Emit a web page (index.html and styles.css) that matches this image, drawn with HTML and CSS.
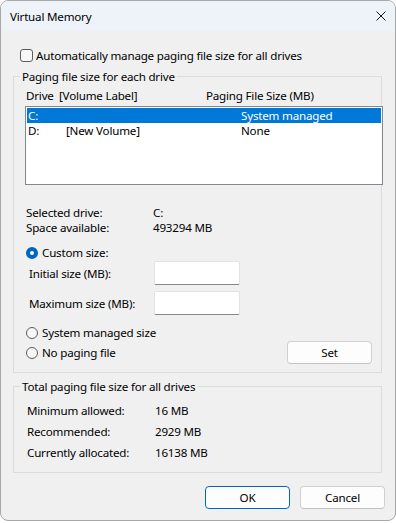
FILE: index.html
```html
<!DOCTYPE html>
<html>
<head>
<meta charset="utf-8">
<link rel="stylesheet" href="styles.css">
</head>
<body>
<div class="window">
  <div class="titlebar">
    <span class="title">Virtual Memory</span>
    <svg class="close" width="10" height="10" viewBox="0 0 10 10"><path d="M0.5 0.5 L9.5 9.5 M9.5 0.5 L0.5 9.5" stroke="#1a1a1a" stroke-width="1" fill="none"/></svg>
  </div>
  <div class="main">
    <div class="check-row">
      <span class="checkbox"></span>
      <span class="check-label">Automatically manage paging file size for all drives</span>
    </div>
    <fieldset class="group group1">
      <legend>Paging file size for each drive</legend>
      <div class="list-header">
        <span class="hd-drive">Drive</span>
        <span class="hd-label">[Volume Label]</span>
        <span class="hd-size">Paging File Size (MB)</span>
      </div>
      <div class="listbox">
        <div class="list-row selected">
          <span class="c-drive">C:</span>
          <span class="c-label"></span>
          <span class="c-size">System managed</span>
        </div>
        <div class="list-row">
          <span class="c-drive">D:</span>
          <span class="c-label">[New Volume]</span>
          <span class="c-size">None</span>
        </div>
      </div>
      <div class="info">
        <div class="info-row"><span class="info-key">Selected drive:</span><span>C:</span></div>
        <div class="info-row"><span class="info-key">Space available:</span><span>493294 MB</span></div>
      </div>
      <div class="radio-row first-radio">
        <span class="radio checked"></span>
        <span>Custom size:</span>
      </div>
      <div class="field-row">
        <span class="field-label">Initial size (MB):</span>
        <span class="textbox"></span>
      </div>
      <div class="field-row second">
        <span class="field-label">Maximum size (MB):</span>
        <span class="textbox"></span>
      </div>
      <div class="radio-row sys-radio">
        <span class="radio"></span>
        <span>System managed size</span>
      </div>
      <div class="radio-row nopage-row">
        <span class="radio"></span>
        <span>No paging file</span>
        <span class="button set-btn">Set</span>
      </div>
    </fieldset>
    <fieldset class="group group2">
      <legend>Total paging file size for all drives</legend>
      <div class="totals">
        <div class="total-row"><span class="total-key">Minimum allowed:</span><span>16 MB</span></div>
        <div class="total-row"><span class="total-key">Recommended:</span><span>2929 MB</span></div>
        <div class="total-row"><span class="total-key">Currently allocated:</span><span>16138 MB</span></div>
      </div>
    </fieldset>
    <div class="buttons">
      <span class="button default">OK</span>
      <span class="button">Cancel</span>
    </div>
  </div>
</div>
</body>
</html>
```
FILE: styles.css
```css
* { box-sizing: border-box; }
html, body { margin: 0; padding: 0; background: #ffffff; }
body {
  font-family: "Noto Sans", "Open Sans", sans-serif;
  font-size: 11.6px;
  letter-spacing: -0.2px;
  line-height: 15px;
  color: #000;
  white-space: nowrap;
}
.window {
  width: 396px;
  height: 521px;
  border: 1px solid #a8a8a8;
  border-radius: 8px;
  background: #f0f0f0;
  overflow: hidden;
}
.titlebar {
  height: 30px;
  background: #eef3f9;
  display: flex;
  align-items: center;
  padding-left: 9px;
  padding-right: 9px;
}
.title { flex: 1; }
.close { display: block; }
.main {
  padding: 0 13px 0 12px;
}
.check-row {
  margin-top: 17px;
  height: 15px;
  display: flex;
  align-items: center;
  padding-left: 7px;
}
.checkbox {
  flex-shrink: 0;
  width: 13px;
  height: 13px;
  border: 1px solid #5c5c5c;
  border-radius: 3px;
  background: #f7f7f7;
}
.check-label { margin-left: 3px; }
.group {
  margin: 6px 0 0 0;
  padding: 0;
  border: 1px solid #dcdcdc;
  min-width: 0;
}
.group legend {
  padding: 0 2px;
  margin-left: 6px;
  line-height: 15px;
}
.group1 { padding-bottom: 8px; }
.list-header {
  margin-top: 4px;
  height: 15px;
  display: flex;
  padding-left: 12px;
}
.hd-drive { width: 33px; flex-shrink: 0; }
.hd-label { width: 147px; flex-shrink: 0; }
.listbox {
  margin-top: 3px;
  margin-left: 11px;
  width: 358px;
  height: 79px;
  border: 1px solid #828790;
  background: #fff;
  padding: 1px;
}
.list-row {
  height: 15px;
  display: flex;
  padding-left: 1px;
}
.list-row.selected { background: #0078d7; color: #fff; }
.c-drive { width: 38px; flex-shrink: 0; }
.c-label { width: 175px; flex-shrink: 0; }
.info { margin-top: 20px; padding-left: 12px; }
.info-row { height: 15px; display: flex; }
.info-key { width: 127px; flex-shrink: 0; }
.radio-row {
  display: flex;
  align-items: center;
  height: 15px;
  padding-left: 12px;
}
.radio {
  flex-shrink: 0;
  width: 12px;
  height: 12px;
  border-radius: 50%;
  border: 1px solid #5c5c5c;
  background: #f7f7f7;
  margin-right: 4px;
}
.radio.checked {
  border: 4px solid #0067c0;
  background: #fff;
}
.first-radio { margin-top: 10px; }
.field-row {
  display: flex;
  align-items: center;
  height: 24px;
  margin-top: 1px;
  padding-left: 15px;
}
.field-row.second { margin-top: 6px; }
.field-label { width: 125px; flex-shrink: 0; }
.textbox {
  width: 86px;
  height: 24px;
  background: #fff;
  border: 1px solid #e3e3e3;
  border-bottom: 1px solid #858585;
  border-radius: 2px;
}
.sys-radio { margin-top: 10px; }
.nopage-row { margin-top: 1px; height: 23px; }
.button {
  display: flex;
  align-items: center;
  justify-content: center;
  width: 85px;
  height: 23px;
  background: #fdfdfd;
  border: 1px solid #d0d0d0;
  border-bottom-color: #c2c2c2;
  border-radius: 4px;
}
.set-btn { margin-left: auto; margin-right: 9px; }
.group2 { margin-top: 6px; padding-bottom: 12px; }
.totals { margin-top: 9px; padding-left: 13px; }
.total-row { height: 15px; display: flex; margin-bottom: 6px; }
.total-row:last-child { margin-bottom: 0; }
.total-key { width: 128px; flex-shrink: 0; }
.buttons {
  margin-top: 13px;
  margin-right: -3px;
  display: flex;
  justify-content: flex-end;
  gap: 10px;
}
.button.default { border-color: #0067c0; }
```
